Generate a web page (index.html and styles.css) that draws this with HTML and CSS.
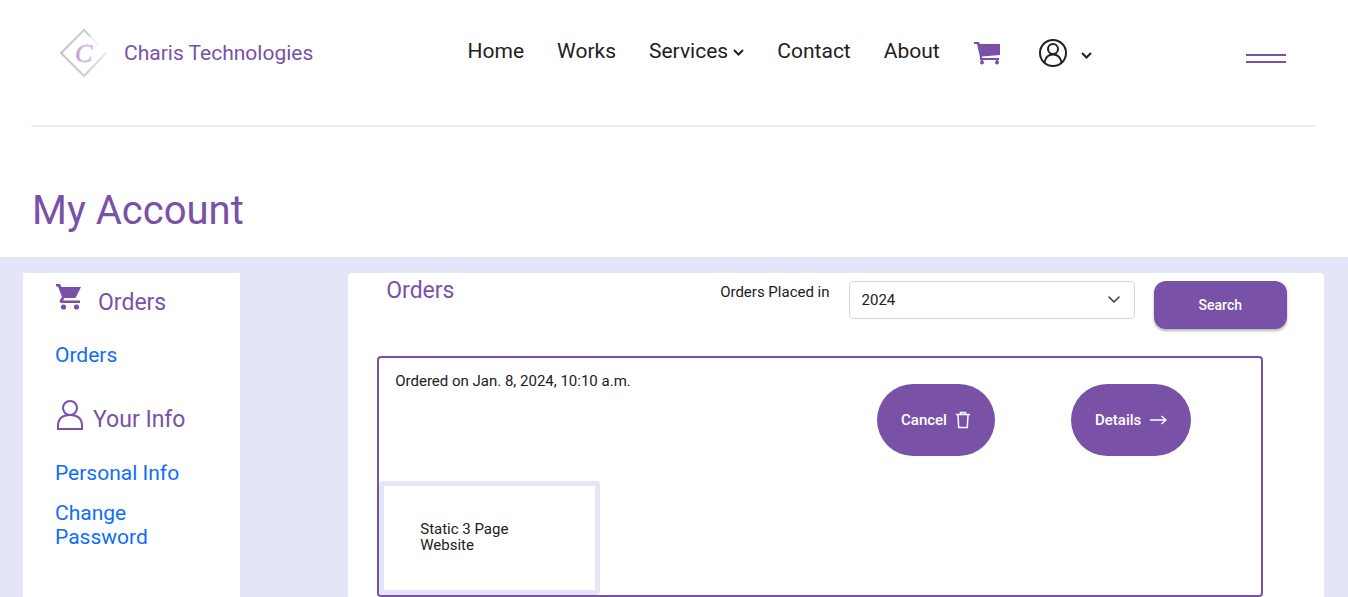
FILE: index.html
```html
<!DOCTYPE html>
<html lang="en">
<head>
  <meta charset="UTF-8">
  <meta name="viewport" content="width=device-width, initial-scale=1">
  <title>My Account - Charis Technologies</title>
  <link rel="stylesheet" href="styles.css">
</head>
<body>
  <header class="site-header">
    <a href="#" class="brand">
      <svg class="brand-logo" width="48" height="50" viewBox="0 0 48 50" aria-hidden="true">
        <defs>
          <linearGradient id="edge" x1="0" y1="0" x2="1" y2="0">
            <stop offset="0" stop-color="#c2c4cd"/>
            <stop offset="0.55" stop-color="#cdcdd6"/>
            <stop offset="1" stop-color="#e6e6ec"/>
          </linearGradient>
        </defs>
        <path d="M47 25 25 48 2 25 25 2l7 7" fill="none" stroke="url(#edge)" stroke-width="2"/>
        <path d="m32 9 8 8" fill="none" stroke="#f0f0f4" stroke-width="2"/>
        <text class="logo-letter" x="16" y="34">C</text>
      </svg>
      <span>Charis Technologies</span>
    </a>
    <nav class="main-nav">
      <a href="#">Home</a>
      <a href="#">Works</a>
      <a href="#">Services
        <svg class="caret" width="11" height="7" viewBox="0 0 11 7"><path d="m1 1 4.500 4.500L10 1" fill="none" stroke="currentColor" stroke-width="2"/></svg>
      </a>
      <a href="#">Contact</a>
      <a href="#">About</a>
      <a href="#" class="cart-link" aria-label="Cart">
        <svg width="28" height="24" viewBox="0 0 28 24" fill="currentColor">
          <path d="M1 1h5l1 2h20v11L9 15.500V17h17v2H7v-3L4 3H1z"/>
          <path d="M8 18h2v3H8zM23 18h2v3h-2z"/>
          <circle cx="9" cy="21.500" r="2"/><circle cx="24" cy="21.500" r="2"/>
        </svg>
      </a>
      <a href="#" class="user-link" aria-label="Account">
        <svg width="30" height="30" viewBox="0 0 30 30" fill="none" stroke="currentColor" stroke-width="2">
          <circle cx="15" cy="15" r="13"/>
          <circle cx="15" cy="11" r="5"/>
          <path d="M6.500 24.500C7.500 19 10.500 16.500 15 16.500s7.500 2.500 8.500 8"/>
        </svg>
        <svg class="user-caret" width="11" height="7" viewBox="0 0 11 7"><path d="m1 1 4.500 4.500L10 1" fill="none" stroke="currentColor" stroke-width="2"/></svg>
      </a>
    </nav>
    <button type="button" class="menu-btn" aria-label="Menu"><span></span><span></span></button>
  </header>

  <h1 class="page-title">My Account</h1>

  <main class="account">
    <aside class="sidebar">
      <h2 class="side-title">
        <svg class="side-cart" width="28" height="28" viewBox="0 0 28 28" fill="currentColor">
          <path d="M1 1h4l1.500 3H26l-5 10c-.5 1-1 1-2 1H9.500L8 17.500h17V20H7c-2 0-3-1-2-3l2-3L3 3.500H1z"/>
          <circle cx="8.500" cy="24" r="2.600"/><circle cx="21.500" cy="24" r="2.600"/>
        </svg>
        Orders
      </h2>
      <ul class="side-links">
        <li><a href="#">Orders</a></li>
      </ul>
      <h2 class="side-title info-title">
        <svg width="28" height="32" viewBox="0 0 28 32" fill="none" stroke="currentColor" stroke-width="2">
          <circle cx="15" cy="8" r="7"/>
          <path d="M3 29v-3c0-7 4-11 12-11s12 4 12 11v3z"/>
        </svg>
        Your Info
      </h2>
      <ul class="side-links">
        <li><a href="#">Personal Info</a></li>
        <li><a href="#">Change Password</a></li>
      </ul>
    </aside>

    <section class="orders">
      <form class="orders-bar">
        <h2>Orders</h2>
        <label for="year">Orders Placed in</label>
        <div class="select-wrap">
          <select id="year">
            <option>2024</option>
          </select>
          <svg width="12" height="8" viewBox="0 0 12 8"><path d="m1 1 5 5 5-5" fill="none" stroke="#343a40" stroke-width="1.500" stroke-linecap="round" stroke-linejoin="round"/></svg>
        </div>
        <button type="submit" class="search-btn">Search</button>
      </form>

      <article class="order">
        <div class="order-top">
          <p>Ordered on Jan. 8, 2024, 10:10 a.m.</p>
          <div>
            <button type="button" class="pill">Cancel
              <svg width="16" height="18" viewBox="0 0 16 18" fill="none" stroke="currentColor" stroke-width="1.500"><path d="M1 3.500h14M5.500 3V1.500h5V3M3 4l.7 12.500h8.600L13 4"/></svg>
            </button>
          </div>
          <div>
            <button type="button" class="pill">Details
              <svg width="18" height="10" viewBox="0 0 18 10" fill="none" stroke="currentColor" stroke-width="1.500"><path d="M1 5h16M12.500 1 17 5l-4.500 4"/></svg>
            </button>
          </div>
        </div>
        <div class="product">Static 3 Page Website</div>
      </article>
    </section>
  </main>
</body>
</html>
```
FILE: styles.css
```css
* {
  box-sizing: border-box;
}

body {
  margin: 0;
  min-height: 100vh;
  display: flex;
  flex-direction: column;
  font-family: Roboto, "Liberation Sans", sans-serif;
  font-size: 15px;
  line-height: 16px;
  color: #212121;
  background-color: #fff;
}

h1, h2, p, ul {
  margin: 0;
  padding: 0;
  font-weight: 400;
}

ul {
  list-style: none;
}

a {
  text-decoration: none;
}

svg {
  flex-shrink: 0;
}

button, select {
  font-family: inherit;
}

/* header */
.site-header {
  margin: 0 32px 0 31px;
  padding: 28px 30px 47px 28px;
  border-bottom: 2px solid #eee;
  display: flex;
  justify-content: space-between;
  align-items: center;
}

.brand {
  display: flex;
  align-items: center;
  gap: 17px;
  font-size: 21px;
  line-height: 24px;
  color: #7952a8;
}

.logo-letter {
  font-family: "Liberation Serif", serif;
  font-size: 26px;
  font-style: italic;
  fill: #b98bd6;
  stroke: #dcc6ec;
  stroke-width: 1px;
}

.main-nav {
  display: flex;
  align-items: center;
  gap: 33px;
  font-size: 21px;
  line-height: 24px;
}

.main-nav a {
  color: #212121;
  padding-bottom: 4px;
}

.caret {
  vertical-align: 2px;
}

.main-nav .cart-link {
  display: flex;
  padding: 0;
  color: #7952a8;
}

.main-nav .user-link {
  display: flex;
  align-items: center;
  gap: 13px;
  padding: 0;
  margin-left: 4px;
}

.user-caret {
  margin-top: 4px;
}

.menu-btn {
  display: flex;
  flex-direction: column;
  gap: 5px;
  width: 40px;
  margin-top: 10px;
  padding: 0;
  border: 0;
  background: none;
}

.menu-btn span {
  height: 2px;
  background-color: #7952a8;
}

.page-title {
  padding: 58px 32px 20px;
  font-size: 40px;
  line-height: 52px;
  color: #7952a8;
}

/* account area */
.account {
  flex: 1;
  display: grid;
  grid-template-columns: repeat(12, 1fr);
  padding: 16px 24px 0 23px;
  background-color: #e5e5fa;
}

.sidebar {
  grid-column: span 2;
  padding: 10px 32px 32px;
  background-color: #fff;
}

.side-title {
  display: flex;
  align-items: flex-end;
  gap: 15px;
  font-size: 23px;
  line-height: 24px;
  color: #7952a8;
}

.side-cart {
  margin-bottom: 4px;
}

.side-title.info-title {
  gap: 10px;
  margin-top: 33px;
}

.side-links {
  padding-top: 28px;
  font-size: 21px;
  line-height: 24px;
}

.info-title + .side-links {
  padding-top: 29px;
}

.side-links li + li {
  margin-top: 16px;
}

.side-links a {
  color: #0d6efd;
}

.orders {
  grid-column: 4 / -1;
  padding-top: 8px;
  border-radius: 4px 4px 0 0;
  background-color: #fff;
}

.orders-bar {
  display: flex;
  align-items: flex-start;
  gap: 19px;
  margin: 0 37px 27px 38px;
}

.orders-bar h2 {
  flex: 1;
  font-size: 23px;
  line-height: 20px;
  color: #7952a8;
}

.orders-bar label {
  padding-top: 3px;
}

.select-wrap {
  display: flex;
  align-items: center;
  width: 286px;
}

.select-wrap select {
  width: 100%;
  height: 38px;
  padding: 0 12px;
  border: 1px solid #ced4da;
  border-radius: 4px;
  appearance: none;
  background-color: #fff;
  font-size: 15px;
  color: #212121;
}

.select-wrap svg {
  margin-left: -27px;
  pointer-events: none;
}

.search-btn {
  padding: 16px 45px;
  border: 0;
  border-radius: 12px;
  background-color: #7952a8;
  box-shadow: 0 2px 3px rgba(0, 0, 0, 0.3);
  font-size: 14px;
  font-weight: 500;
  line-height: 16px;
  color: #fff;
}

.order {
  margin: 0 61px 0 29px;
  border: 2px solid #7952a8;
  border-radius: 4px;
}

.order-top {
  display: grid;
  grid-template-columns: 1fr 22% 22%;
  align-items: start;
  padding-bottom: 25px;
}

.order-top p {
  padding: 15px 16px;
}

.order-top div {
  padding: 26px 4px 0;
}

.pill {
  display: flex;
  align-items: center;
  gap: 8px;
  height: 72px;
  padding: 0 24px;
  border: 0;
  border-radius: 36px;
  background-color: #7952a8;
  font-size: 15px;
  font-weight: 500;
  color: #fff;
}

.product {
  width: 25%;
  padding: 35px 32px 37px 36px;
  border: 5px solid #e5e5fa;
  border-radius: 4px;
}
```
